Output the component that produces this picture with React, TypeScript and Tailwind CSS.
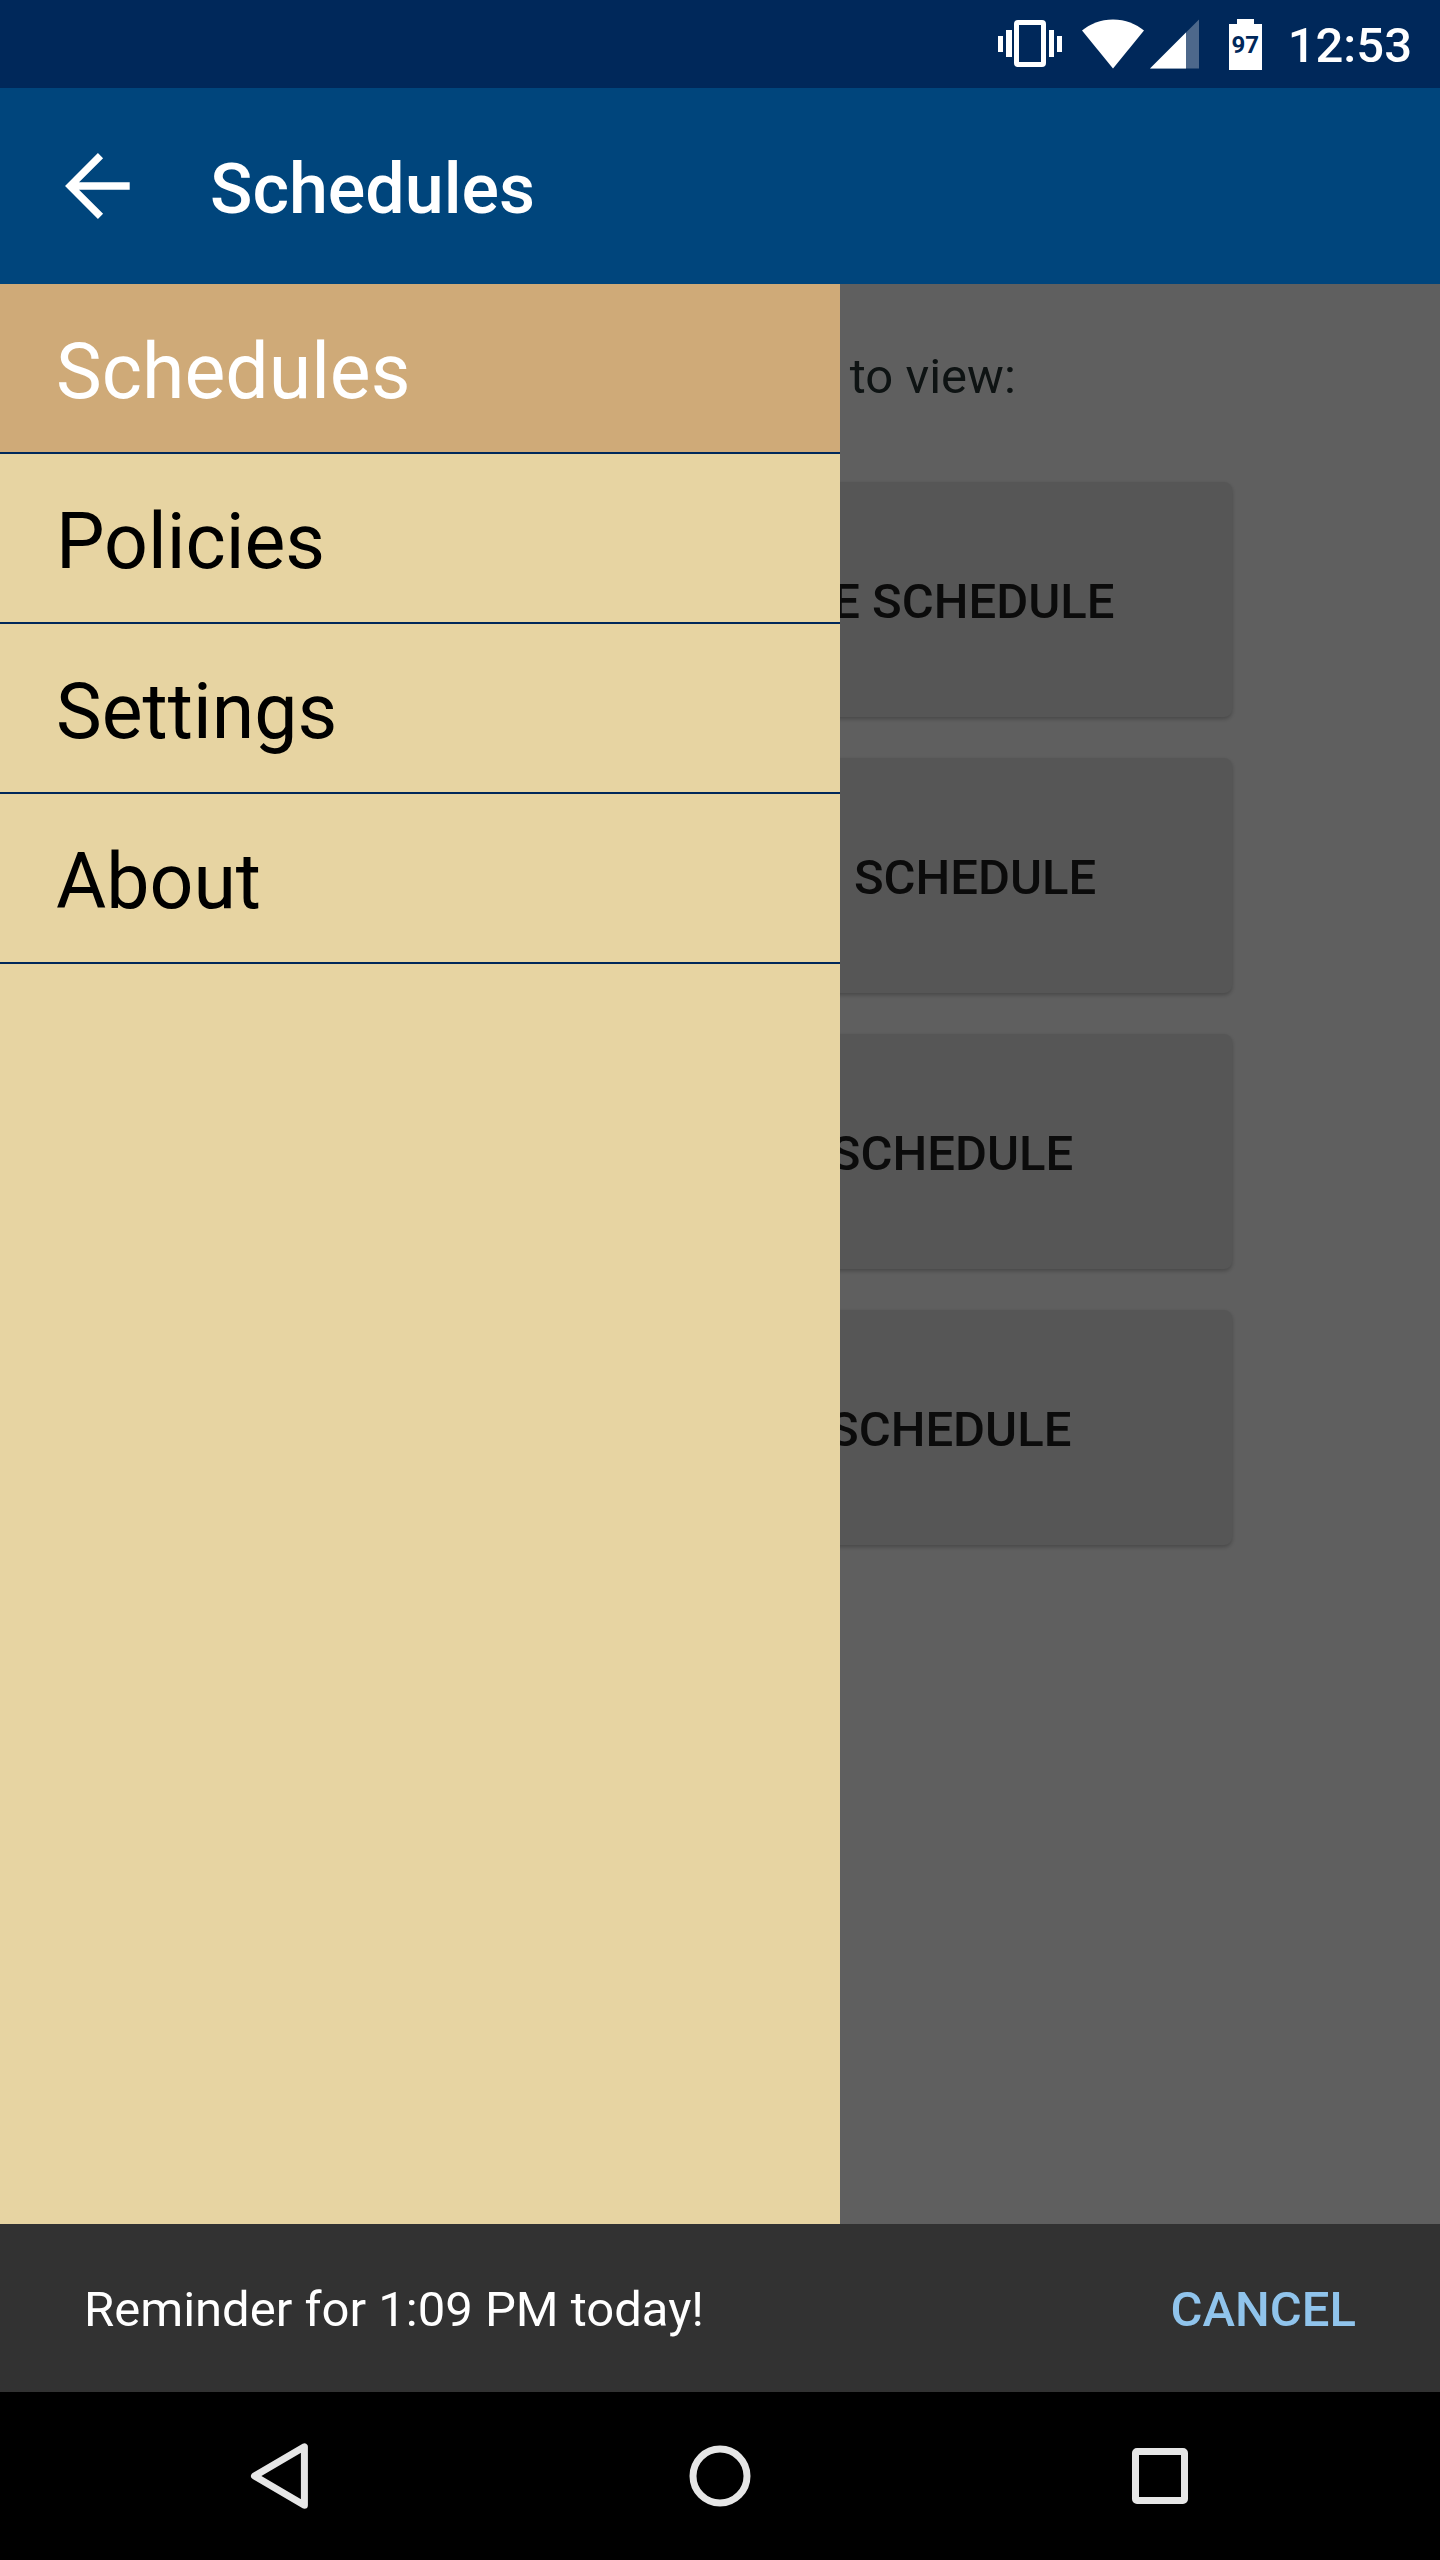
import { useState } from "react";

const pages = ["Schedules", "Policies", "Settings", "About"];

const schedules = [
  "Friday Service Route Schedule",
  "Afternoon Campus Schedule",
  "Afternoon Route Schedule",
  "Saturday Service Schedule",
];

function StatusBar() {
  return (
    <div className="flex h-[88px] items-center justify-end bg-[#00285a] pr-7 text-white">
      <svg className="mr-5 h-12 w-16" viewBox="0 0 64 48" fill="currentColor" aria-label="Vibrate">
        <rect x="0" y="16" width="5" height="16" />
        <rect x="8" y="10" width="6" height="27" />
        <rect x="51" y="10" width="5" height="27" />
        <rect x="59" y="16" width="5" height="16" />
        <path
          fillRule="evenodd"
          d="M20 0h24a4 4 0 0 1 4 4v39a4 4 0 0 1-4 4H20a4 4 0 0 1-4-4V4a4 4 0 0 1 4-4zM21 5v37h22V5z"
        />
      </svg>
      <svg className="mr-1.5 h-[50px] w-[62px]" viewBox="0 0 62 50" fill="currentColor" aria-label="Wi-Fi">
        <path d="M0 11.500C8 5 18.500 0.500 31 0.500S54 5 62 11.500L31 49.500z" />
      </svg>
      <svg className="mr-[30px] h-[50px] w-[49px]" viewBox="0 0 49 50" fill="currentColor" aria-label="Signal">
        <path d="M49 0.500V49.500H0z" opacity="0.3" />
        <path d="M36 13.500V49.500H0z" />
      </svg>
      <div className="mr-[26px] flex flex-col items-center">
        <div className="h-[5px] w-[17px] bg-white" />
        <div className="flex h-[46px] w-[33px] items-center justify-center bg-white pb-1 text-2xl leading-none font-bold text-[#00285a]">
          97
        </div>
      </div>
      <time className="pt-1 text-[49px] leading-[58px] font-medium">12:53</time>
    </div>
  );
}

function AppBar() {
  return (
    <header className="flex h-[196px] items-center bg-[#00457c] text-white">
      <button type="button" aria-label="Back" className="ml-14 flex h-[84px] w-[84px] items-center">
        <svg className="h-[84px] w-[84px]" viewBox="0 0 84 84" fill="none" stroke="currentColor" strokeWidth="7.300">
          <path d="M44.500 11.700L14.200 42L44.500 72.300M14.200 42H73.700" />
        </svg>
      </button>
      <h1 className="ml-[70px] pt-1.5 text-[70px] leading-[82px] font-medium">Schedules</h1>
    </header>
  );
}

function Drawer({ current, onPick }: { current: string; onPick: (page: string) => void }) {
  return (
    <nav className="absolute inset-y-0 left-0 w-7/12 bg-[#e7d4a2]">
      <ul>
        {pages.map((page) => (
          <li key={page} className="border-b-2 border-[#00285a]">
            <button
              type="button"
              onClick={() => onPick(page)}
              className={
                "flex h-[168px] w-full items-center px-14 pt-2 text-left text-[77px] leading-[90px] " +
                (page === current ? "bg-[#cfaa78] text-white" : "text-black")
              }
            >
              {page}
            </button>
          </li>
        ))}
      </ul>
    </nav>
  );
}

export default function App() {
  const [current, setCurrent] = useState("Schedules");

  return (
    <div className="flex min-h-screen flex-col bg-black font-['Roboto',sans-serif]">
      <StatusBar />
      <AppBar />
      <main className="relative flex-1 bg-[#eeeeee]">
        <div className="flex flex-col px-52 pt-16 pb-14">
          <p className="text-center text-[49px] leading-[58px] text-[#233030]">Choose a schedule to view:</p>
          <div className="mt-[76px] flex flex-col gap-[41px]">
            {schedules.map((name) => (
              <button
                key={name}
                type="button"
                className="flex h-[235px] items-center justify-center rounded-lg bg-[#d6d7d7] pt-1 text-[49px] leading-[58px] font-medium whitespace-nowrap text-[#1c1c1c] uppercase shadow-[0_2px_4px_rgba(0,0,0,0.25)]"
              >
                {name}
              </button>
            ))}
          </div>
        </div>
        <div className="absolute inset-0 bg-black/60" />
        <Drawer current={current} onPick={setCurrent} />
      </main>
      <div
        role="status"
        className="flex h-[168px] items-center justify-between bg-[#323232] px-[84px] pt-1 text-[49px] leading-[58px]"
      >
        <span className="text-white">Reminder for 1:09 PM today!</span>
        <button type="button" className="font-medium text-[#90c4ec]">
          CANCEL
        </button>
      </div>
      <div className="grid h-[168px] grid-cols-3 items-center justify-items-center bg-black px-[60px] text-[#e6e6e6]">
        <button type="button" aria-label="Back">
          <svg
            className="h-[84px] w-[84px]"
            viewBox="0 0 84 84"
            fill="none"
            stroke="currentColor"
            strokeWidth="7"
            strokeLinejoin="round"
          >
            <path d="M66.400 12.800V71.200L16.500 42z" />
          </svg>
        </button>
        <button type="button" aria-label="Home">
          <svg className="h-[84px] w-[84px]" viewBox="0 0 84 84" fill="none" stroke="currentColor" strokeWidth="7">
            <circle cx="42" cy="42" r="27" />
          </svg>
        </button>
        <button type="button" aria-label="Recent apps">
          <svg className="h-[84px] w-[84px]" viewBox="0 0 84 84" fill="currentColor">
            <path
              fillRule="evenodd"
              d="M19 14H65a5 5 0 0 1 5 5V65a5 5 0 0 1-5 5H19a5 5 0 0 1-5-5V19a5 5 0 0 1 5-5zM21 21V63H63V21z"
            />
          </svg>
        </button>
      </div>
    </div>
  );
}
